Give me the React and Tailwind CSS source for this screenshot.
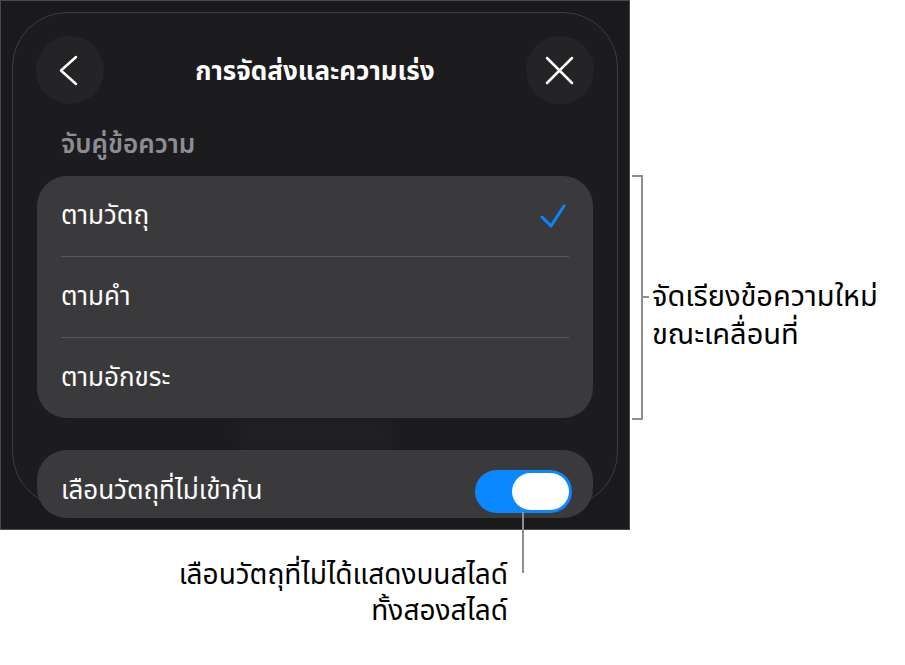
const thai = { fontFamily: '"Noto Sans Thai", "Noto Sans", "Liberation Sans", sans-serif' };

function Row({ label, checked }) {
    return (
        <div className="flex h-[80px] items-center justify-between pl-[24px] pr-[27px]">
            <span className="text-[26px] leading-[36px] text-white">{label}</span>
            {checked && (
                <svg width="26" height="26" viewBox="0 0 26 26" fill="none">
                    <path d="M2 14 L11 23 L24 3" stroke="#0a84ff" strokeWidth="3" strokeLinecap="round" strokeLinejoin="round" />
                </svg>
            )}
        </div>
    );
}

function Separator() {
    return <div className="mx-[24px] h-px bg-[#58585b]" />;
}

export default function App() {
    return (
        <div className="relative h-[665px] w-[905px] overflow-hidden bg-white" style={thai}>
            <div className="flex">
                {/* device frame */}
                <div className="h-[530px] w-[630px] shrink-0 border border-[#4a4a4c] bg-[#1a1a1c] p-[11px]">
                    <div className="h-[495px] rounded-[55px] border border-[#3d3d40] bg-[#1c1c1e]">
                        <div className="flex items-center px-[23px] pt-[23px]">
                            <button className="flex h-[68px] w-[68px] items-center justify-center rounded-full bg-[#242426]">
                                <svg width="68" height="68" viewBox="0 0 68 68" fill="none">
                                    <path d="M40 21 L25 34.5 L40 48" stroke="white" strokeWidth="2.5" strokeLinecap="round" strokeLinejoin="round" />
                                </svg>
                            </button>
                            <h1 className="flex-1 pt-[3px] text-center text-[26px] font-bold leading-[36px] text-white">การจัดส่งและความเร่ง</h1>
                            <button className="flex h-[68px] w-[68px] items-center justify-center rounded-full bg-[#242426]">
                                <svg width="68" height="68" viewBox="0 0 68 68" fill="none">
                                    <path d="M21 22 L46 47 M46 22 L21 47" stroke="white" strokeWidth="2.5" strokeLinecap="round" />
                                </svg>
                            </button>
                        </div>

                        <div className="mt-[27px] pl-[48px] text-[26px] font-semibold leading-[28px] text-[#8d8d92]">
                            จับคู่ข้อความ
                        </div>

                        <div className="mx-[24px] mt-[17px] rounded-[30px] bg-[#3a3a3c]">
                            <Row label="ตามวัตถุ" checked />
                            <Separator />
                            <Row label="ตามคำ" />
                            <Separator />
                            <Row label="ตามอักขระ" />
                        </div>

                        {/* faint glow between cards */}
                        <div className="flex h-[32px] items-center justify-center">
                            <div className="h-[18px] w-[160px] rounded-full bg-white/[0.04] blur-md" />
                        </div>

                        <div className="mx-[24px] flex h-[68px] items-center justify-between rounded-[30px] bg-[#3a3a3c] pl-[24px] pr-[21px] pt-[14px]">
                            <span className="text-[26px] leading-[36px] text-white">เลือนวัตถุที่ไม่เข้ากัน</span>
                            <div className="flex h-[43px] w-[97px] items-center justify-end rounded-full bg-[#0a88ff] pr-[3px]">
                                <div className="h-[37px] w-[57px] rounded-full bg-white" />
                            </div>
                        </div>
                    </div>
                </div>

                {/* right callout */}
                <div className="flex items-start pt-[175px]">
                    <div className="ml-[2px] h-[245px] w-[11px] border-y-2 border-r-2 border-[#8e8e8e]" />
                    <div className="mt-[103px] flex items-start">
                        <div className="mt-[18px] h-[2px] w-[6px] bg-[#8e8e8e]" />
                        <div className="ml-[3px] whitespace-nowrap text-[29px] text-black">
                            <div className="h-[38px] leading-[38px]">จัดเรียงข้อความใหม่</div>
                            <div className="h-[38px] leading-[38px]">ขณะเคลื่อนที่</div>
                        </div>
                    </div>
                </div>
            </div>

            {/* bottom callout */}
            <div className="absolute left-[522px] top-[512px] h-[61px] w-[2px] bg-[#8e8e8e]" />
            <div className="mt-[28px] w-[508px] whitespace-nowrap text-right text-[28px] text-black">
                <div className="h-[36px] leading-[36px]">เลือนวัตถุที่ไม่ได้แสดงบนสไลด์</div>
                <div className="h-[36px] leading-[36px]">ทั้งสองสไลด์</div>
            </div>
        </div>
    );
}
